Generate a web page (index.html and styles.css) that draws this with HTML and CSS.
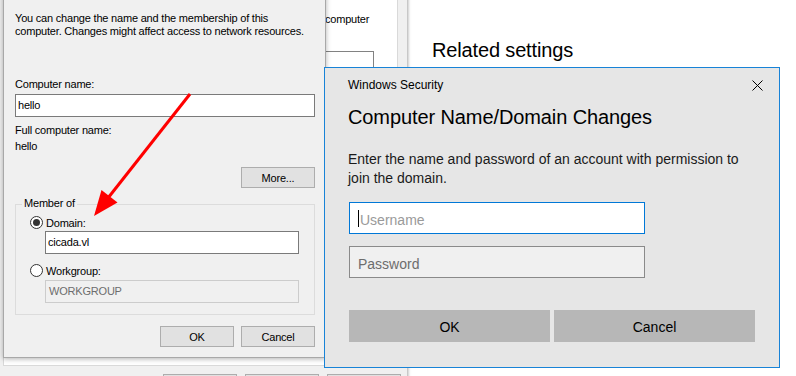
FILE: index.html
```html
<!DOCTYPE html>
<html>
	<head>
		<title>Computer Name/Domain Changes</title><meta charset="utf-8">
		<link rel="stylesheet" href="styles.css">
	</head>
	<body>
		<div id="settings">
			<h2 class="related">Related settings</h2>
		</div>

		<div id="sysprops">
			<div class="tabpage">
				<p class="sp-text">computer</p>
				<div class="sp-box"></div>
			</div>
			<div class="sp-buttons">
				<span class="btn" title="OK"></span>
				<span class="btn" title="Cancel"></span>
				<span class="btn" title="Apply"></span>
			</div>
		</div>

		<div id="namechg">
			<p class="intro">You can change the name and the membership of this<br/>computer. Changes might affect access to network resources.</p>
			<p class="lbl name-lbl">Computer name:</p>
			<div class="tbox">hello</div>
			<p class="lbl full-lbl">Full computer name:</p>
			<p class="lbl full-val">hello</p>
			<div class="more-row"><span class="btn">More...</span></div>

			<div class="group">
				<span class="legend">Member of</span>
				<div class="radio-row first"><span class="radio checked"></span>Domain:</div>
				<div class="tbox sub">cicada.vl</div>
				<div class="radio-row"><span class="radio"></span>Workgroup:</div>
				<div class="tbox sub off">WORKGROUP</div>
			</div>

			<div class="dlg-buttons">
				<span class="btn">OK</span>
				<span class="btn">Cancel</span>
			</div>
		</div>

		<svg id="arrow" width="796" height="376" viewBox="0 0 796 376">
			<line x1="190" y1="94" x2="108" y2="198" stroke="#ff0000" stroke-width="3"/>
			<polygon points="94,216 101.5,190 117.5,202.5" fill="#ff0000"/>
		</svg>

		<div id="winsec">
			<div class="ws-title">
				<span>Windows Security</span>
				<svg class="ws-close" width="11" height="11" viewBox="0 0 11 11">
					<path d="M0.5 0.5 L10.5 10.5 M10.5 0.5 L0.5 10.5" stroke="#000" stroke-width="1"/>
				</svg>
			</div>
			<h1 class="ws-head">Computer Name/Domain Changes</h1>
			<p class="ws-text">Enter the name and password of an account with permission to<br/>join the domain.</p>
			<div class="field active"><span class="caret"></span><span class="ph">Username</span></div>
			<div class="field"><span class="ph dark">Password</span></div>
			<div class="ws-buttons">
				<span class="ws-btn">OK</span>
				<span class="ws-btn">Cancel</span>
			</div>
		</div>
	</body>
</html>
```
FILE: styles.css
```css
* { box-sizing: border-box; }
body {
	margin: 0;
	width: 796px;
	height: 376px;
	overflow: hidden;
	position: relative;
	background: #fff;
	font-family: "Liberation Sans", Arial, sans-serif;
	color: #000;
}
p { margin: 0; }

/* settings window behind everything */
#settings { position: absolute; left: 408px; top: 0; right: 0; bottom: 0; background: #fff; padding: 38px 0 0 24px; }
.related { margin: 0; font-weight: normal; font-size: 20px; line-height: 24px; letter-spacing: -0.15px; }

/* system properties window */
#sysprops {
	position: absolute; left: -10px; top: -20px; width: 417px; height: 420px;
	background: #f0f0f0;
	box-shadow: 1px 0 3px rgba(0,0,0,.35);
}
.tabpage {
	margin-left: 13px; width: 395px; height: 386px;
	background: #fff; border: 1px solid #d9d9d9;
	padding: 32px 0 0 321px;
}
.sp-text { font-size: 11px; line-height: 13px; letter-spacing: -0.2px; }
.sp-box { margin: 25px 0 0 -40px; width: 89px; height: 60px; border-top: 1px solid #828282; border-right: 1px solid #828282; }
.sp-buttons { display: flex; gap: 8px; margin: 8px 0 0 173px; }
.sp-buttons .btn { height: 22px; }

.btn {
	display: flex; align-items: center; justify-content: center;
	width: 74px; height: 21px;
	background: #e1e1e1; border: 1px solid #adadad;
	font-size: 11px; letter-spacing: -0.2px;
}

/* computer name changes dialog */
#namechg {
	position: absolute; left: 3px; top: -10px; width: 323px; height: 368px;
	background: #f0f0f0;
	border: 1px solid #a8a8a8;
	box-shadow: 0 1px 5px rgba(0,0,0,.3);
	padding: 21px 10px 0 11px;
	font-size: 11px; letter-spacing: -0.2px;
}
.intro { line-height: 13px; }
.lbl { line-height: 13px; }
.name-lbl { margin-top: 40px; }
.tbox {
	margin-top: 3px; height: 23px;
	background: #fff; border: 1px solid #7a7a7a;
	padding-left: 2px; line-height: 21px;
}
.full-lbl { margin-top: 7px; }
.full-val { margin-top: 3px; }
.more-row { display: flex; justify-content: flex-end; margin-top: 14px; }

.group { margin-top: 16px; height: 111px; border: 1px solid #dcdcdc; }
.legend { display: block; width: max-content; margin: -8px 0 0 6px; padding: 0 2px; background: #f0f0f0; line-height: 13px; }
.radio-row { display: flex; align-items: center; gap: 3px; margin: 10px 0 0 14px; height: 13px; }
.radio-row.first { margin-top: 6px; }
.radio {
	width: 13px; height: 13px; border-radius: 50%;
	border: 1px solid #333; background: #fff;
	display: flex; align-items: center; justify-content: center;
}
.radio.checked::after { content: ""; width: 7px; height: 7px; border-radius: 50%; background: #333; }
.tbox.sub { margin: 2px 0 0 29px; width: 254px; }
.tbox.sub.off { margin-top: 3px; background: #f0f0f0; border-color: #cccccc; color: #6d6d6d; padding-left: 3px; }

.dlg-buttons { display: flex; justify-content: flex-end; gap: 7px; margin-top: 11px; }

#arrow { position: absolute; left: 0; top: 0; pointer-events: none; }

/* windows security dialog */
#winsec {
	position: absolute; left: 324px; top: 67px; width: 456px; height: 301px;
	background: #e6e6e6; border: 1px solid #1883d7;
	padding: 0 24px 0 24px;
}
.ws-title { display: flex; justify-content: space-between; align-items: center; height: 14px; margin: 10px -8px 0 -1px; font-size: 12px; }
.ws-close { display: block; }
.ws-head { margin: 13px 0 0 -1px; font-weight: normal; font-size: 20px; line-height: 24px; letter-spacing: -0.1px; }
.ws-text { margin: 21px 0 0 -1px; font-size: 14px; line-height: 19px; color: #1a1a1a; }
.field {
	margin-top: 14px; width: 296px; height: 32px;
	background: #f0f0f0; border: 1px solid #8a8a8a;
	display: flex; align-items: center; padding: 3px 0 0 8px;
	font-size: 14px;
}
.field.active { background: #fff; border-color: #0078d7; }
.field + .field { margin-top: 12px; }
.caret { width: 1px; height: 17px; background: #000; margin: -2px 1px 0 0; }
.ph { color: #9a9a9a; }
.ph.dark { color: #6d6d6d; }
.ws-buttons { display: flex; gap: 4px; margin-top: 32px; }
.ws-btn {
	display: flex; align-items: center; justify-content: center;
	width: 202px; height: 32px; padding-top: 2px; background: #b7b7b7; font-size: 14px;
}
```
